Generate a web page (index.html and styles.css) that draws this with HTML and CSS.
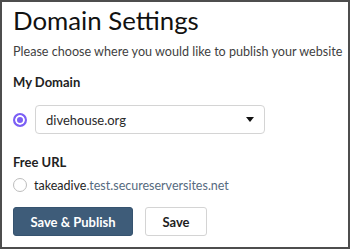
FILE: index.html
```html
<!DOCTYPE html>
<html>
<head>
<meta charset="utf-8">
<link rel="stylesheet" href="styles.css">
</head>
<body>
<div class="frame">
  <h1 class="title">Domain Settings</h1>
  <p class="desc">Please choose where you would like to publish your website</p>
  <div class="label label-domain">My Domain</div>
  <div class="row row-domain">
    <span class="radio radio-on"></span>
    <div class="select">
      <span class="select-text">divehouse.org</span>
      <svg class="caret" width="8" height="5" viewBox="0 0 8 5"><path d="M0 0H8L4 5Z" fill="#111"/></svg>
    </div>
  </div>
  <div class="label label-free">Free URL</div>
  <div class="row row-free">
    <span class="radio"></span>
    <span class="url"><span class="url-sub">takeadive</span>.test.secureserversites.net</span>
  </div>
  <div class="actions">
    <button class="btn btn-primary">Save &amp; Publish</button>
    <button class="btn btn-secondary">Save</button>
  </div>
</div>
</body>
</html>
```
FILE: styles.css
```css
html, body {
  margin: 0;
  padding: 0;
  background: #fff;
}
.frame {
  width: 350px;
  height: 249px;
  box-sizing: border-box;
  border: 2px solid #4d4d4d;
  padding: 3px 11px 0;
  font-family: "Lato", sans-serif;
  color: #1b1b1b;
}
.title {
  margin: 0;
  font-size: 25.8px;
  font-weight: 400;
  line-height: 30px;
  color: #111;
}
.desc {
  margin: 8px 0 0;
  font-size: 12.6px;
  line-height: 18px;
  color: #3f3f3f;
  white-space: nowrap;
}
.label {
  font-size: 13px;
  font-weight: 700;
  line-height: 18px;
  color: #222;
}
.label-domain {
  margin-top: 12px;
}
.label-free {
  margin-top: 19px;
}
.row {
  display: flex;
  align-items: center;
}
.row-domain {
  margin-top: 14px;
  gap: 8px;
}
.radio {
  width: 14px;
  height: 14px;
  box-sizing: border-box;
  border: 1px solid #bdbdbd;
  border-radius: 50%;
  background: #fff;
  flex: none;
}
.radio-on {
  border: 2px solid #7b5ff5;
  background: #7b5ff5;
  box-shadow: inset 0 0 0 2px #fff;
}
.select {
  width: 230px;
  height: 29px;
  box-sizing: border-box;
  border: 1px solid #d4d4d4;
  border-radius: 4px;
  display: flex;
  align-items: center;
  justify-content: space-between;
  padding: 0 10px 0 10px;
}
.select-text {
  font-size: 13px;
  color: #2a2a2a;
}
.caret {
  display: block;
}
.row-free {
  margin-top: 4px;
  height: 20px;
  gap: 7px;
}
.url {
  font-size: 12.5px;
  color: #566a80;
}
.url-sub {
  color: #1e1e1e;
}
.actions {
  margin-top: 12px;
  display: flex;
  gap: 12px;
}
.btn {
  height: 29px;
  box-sizing: border-box;
  border-radius: 3px;
  font-family: "Lato", sans-serif;
  font-size: 13px;
  font-weight: 700;
  padding: 0;
  cursor: pointer;
}
.btn-primary {
  width: 120px;
  background: #3e5c79;
  border: 1px solid #36536f;
  color: #fff;
}
.btn-secondary {
  width: 62px;
  background: #fff;
  border: 1px solid #d4d4d4;
  color: #1e1e1e;
}
```
